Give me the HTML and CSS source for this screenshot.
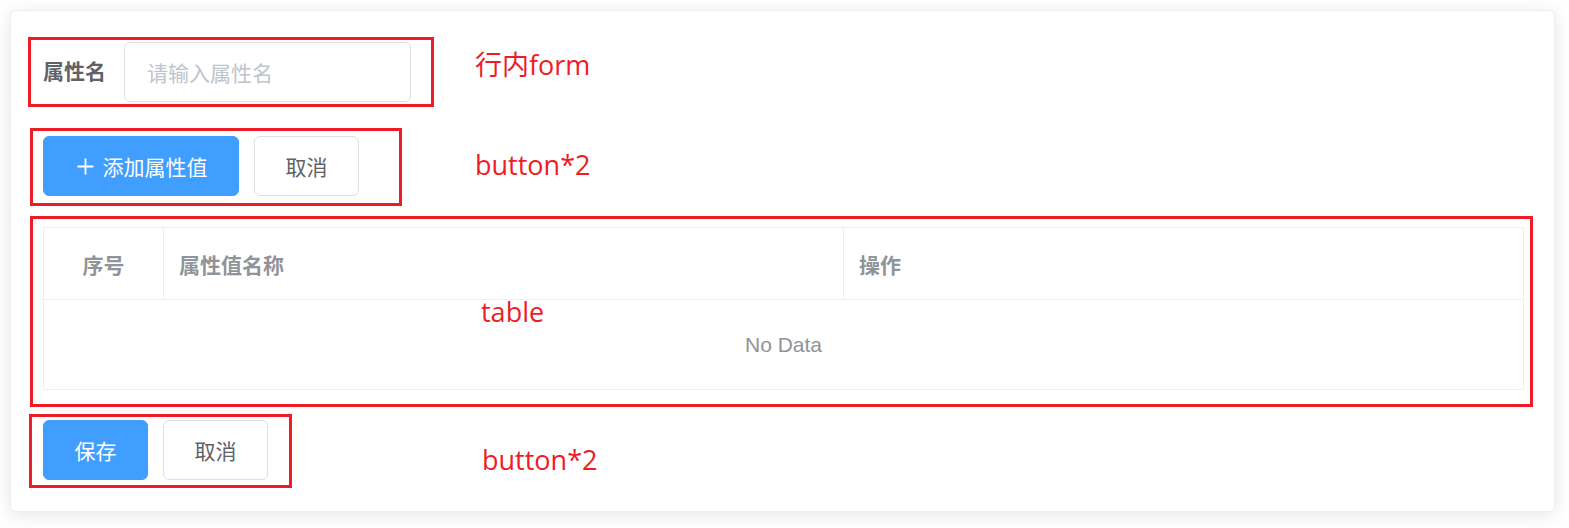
FILE: index.html
```html
<!DOCTYPE html>
<html lang="zh-CN">
<head>
<meta charset="utf-8">
<title>属性</title>
<link rel="stylesheet" href="styles.css">
</head>
<body>
<div class="card">
  <div class="form-inline">
    <label class="form-label">属性名</label>
    <div class="input"><span class="placeholder">请输入属性名</span></div>
  </div>
  <div class="btn-row">
    <button class="btn btn-primary"><svg class="icon" viewBox="0 0 21 21" width="21" height="21"><path d="M10.5 2.5v16M2.5 10.5h16" stroke="#fff" stroke-width="1.8" fill="none"/></svg><span>添加属性值</span></button>
    <button class="btn">取消</button>
  </div>
  <table class="table">
    <colgroup><col class="c1"><col><col></colgroup>
    <thead>
      <tr><th class="center">序号</th><th>属性值名称</th><th>操作</th></tr>
    </thead>
    <tbody>
      <tr><td colspan="3" class="empty">No Data</td></tr>
    </tbody>
  </table>
  <div class="btn-row last">
    <button class="btn btn-primary">保存</button>
    <button class="btn">取消</button>
  </div>
</div>

<div class="mark m1"></div>
<div class="mark m2"></div>
<div class="mark m3"></div>
<div class="mark m4"></div>
<div class="note n1">行内form</div>
<div class="note n2">button*2</div>
<div class="note n3">table</div>
<div class="note n4">button*2</div>
</body>
</html>
```
FILE: styles.css
```css
* { box-sizing: border-box; }
html, body { margin: 0; padding: 0; background: #fff; }
body {
  position: relative;
  width: 1569px;
  height: 528px;
  padding: 10px 0 0 10px;
  font-family: "Liberation Sans", "Noto Sans CJK SC", sans-serif;
  font-size: 21px;
  color: #606266;
}
.card {
  width: 1545px;
  height: 502px;
  background: #fff;
  border: 1px solid #ebeef5;
  border-radius: 6px;
  box-shadow: 0 3px 18px rgba(0, 0, 0, 0.1);
  padding: 31px 30px 30px 32px;
}
.form-inline {
  display: flex;
  align-items: center;
  height: 60px;
  margin-bottom: 34px;
}
.form-label {
  width: 81px;
  padding-right: 18px;
  font-weight: bold;
  color: #606266;
  line-height: 60px;
}
.input {
  width: 287px;
  height: 60px;
  border: 1px solid #dcdfe6;
  border-radius: 6px;
  padding: 0 22px;
  display: flex;
  align-items: center;
}
.placeholder { color: #c0c4cc; }
.btn-row {
  display: flex;
  gap: 15px;
  height: 60px;
  margin-bottom: 31px;
}
.btn-row.last { margin-bottom: 0; margin-top: 30px; }
.btn {
  height: 60px;
  padding: 0 30.5px;
  border: 1px solid #dcdfe6;
  border-radius: 6px;
  background: #fff;
  color: #606266;
  font-family: inherit;
  font-size: 21px;
  display: flex;
  align-items: center;
  cursor: pointer;
}
.btn-primary {
  background: #409eff;
  border-color: #409eff;
  color: #fff;
}
.icon { margin-right: 7px; }
.table {
  width: 1481px;
  border-collapse: collapse;
  table-layout: fixed;
  border: 1px solid #ebeef5;
}
.c1 { width: 120px; }
.table th {
  height: 72px;
  text-align: left;
  padding: 0 15px;
  color: #909399;
  font-weight: bold;
  border: 1px solid #ebeef5;
}
.table th.center { text-align: center; }
.table td.empty {
  height: 90px;
  text-align: center;
  color: #909399;
  border: 1px solid #ebeef5;
  padding: 0;
}
.mark {
  position: absolute;
  border: 3px solid #ee1c25;
}
.m1 { left: 28px; top: 37px; width: 406px; height: 70px; }
.m2 { left: 30px; top: 128px; width: 372px; height: 78px; }
.m3 { left: 30px; top: 216px; width: 1503px; height: 191px; }
.m4 { left: 29px; top: 414px; width: 263px; height: 74px; }
.note {
  position: absolute;
  font-family: "Open Sans", "Noto Sans CJK SC", sans-serif;
  font-size: 27px;
  line-height: 27px;
  color: #ee1c25;
  white-space: nowrap;
}
.n1 { left: 475px; top: 51px; }
.n2 { left: 475px; top: 151px; }
.n3 { left: 481px; top: 298px; }
.n4 { left: 482px; top: 446px; }
```
